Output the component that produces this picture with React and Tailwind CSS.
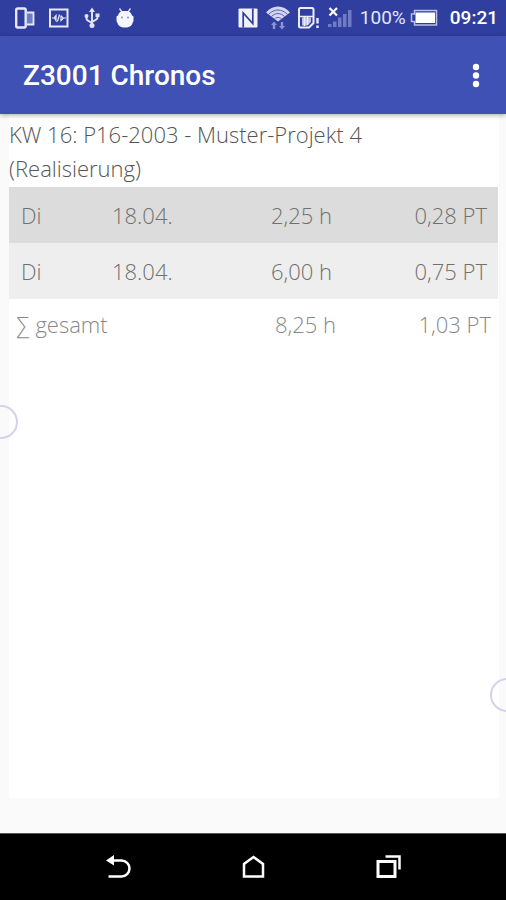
import React from 'react';

const entries = [
  { day: 'Di', date: '18.04.', hours: '2,25 h', pt: '0,28 PT' },
  { day: 'Di', date: '18.04.', hours: '6,00 h', pt: '0,75 PT' },
];

// --- Status bar icons (24px high viewboxes) ---
const DevicesIcon = () => (
  <svg width="20" height="24" viewBox="0 0 20 24" fill="none" stroke="#e6e8f8">
    <path d="M12 7h6v11h-6z" fill="#6f7bc4" stroke="none" />
    <rect x="1.2" y="2.5" width="9.500" height="19" rx="1.5" strokeWidth="2.4" />
    <path d="M12 6.500h6.500v12H12" strokeWidth="1.8" />
  </svg>
);

const CodeIcon = () => (
  <svg width="20" height="24" viewBox="0 0 20 24" fill="none" stroke="#e6e8f8">
    <rect x="1" y="3.500" width="17.500" height="17" strokeWidth="2" />
    <path d="M3 12h2l2-2.500v5L5.500 12M10.500 8.500l-2 7M12 9.500v5l2.500-2.500H17M12 9.500l2 2.500" strokeWidth="1.2" />
  </svg>
);

const UsbIcon = () => (
  <svg width="18" height="24" viewBox="0 0 18 24" fill="none" stroke="#e0e3f6" strokeWidth="2">
    <path d="M9 5v14M3.5 10v2.500q0 1.500 1.500 2.200l4 2.300M14.500 9.500v2q0 1.500-1.500 2.200l-4 2.300" />
    <path d="M9 1.500l3 4.500H6z" fill="#e0e3f6" stroke="none" />
    <circle cx="9" cy="19.500" r="2.500" fill="#e0e3f6" stroke="none" />
    <circle cx="3.500" cy="10" r="2" fill="#e0e3f6" stroke="none" />
    <path d="M12.500 7.500h4v3.500h-4z" fill="#e0e3f6" stroke="none" />
  </svg>
);

const DroidIcon = () => (
  <svg width="20" height="24" viewBox="0 0 20 24" fill="#f5f6ff">
    <path d="M4.500 2.500L7 6M15.500 2.500L13 6" stroke="#e0e3f6" strokeWidth="1.300" />
    <path d="M3 9.500c.5-2.500 3-4.500 5-4.500h4c2 0 4.500 2 5 4.500l1.500 1v4.500L17.500 17c-.5 2.500-3 4.500-7.500 4.500S3 19.500 2.500 17l-1-2v-4.500z" />
    <circle cx="7" cy="11.500" r="1" fill="#8791d0" />
    <circle cx="13" cy="11.500" r="1" fill="#8791d0" />
  </svg>
);

const NfcIcon = () => (
  <svg width="20" height="24" viewBox="0 0 20 24">
    <rect x="0.500" y="2.500" width="19" height="19" rx="1" fill="#f0f2fd" />
    <path d="M5.200 21.500V7l9.600 10.500V2.500" fill="none" stroke="#303f9f" strokeWidth="1.700" />
  </svg>
);

const WifiIcon = () => (
  <svg width="24" height="24" viewBox="0 0 24 24">
    <path d="M0 6.500C6-1.500 18-1.500 24 6.500L12 15.500z" fill="#d3d6f0" />
    <path d="M2.500 8.500c5.500-6 13.500-6 19 0M5.500 10.500c4-4 9-4 13 0M8.500 13c2-2 5-2 7 0" fill="none" stroke="#5260b4" strokeWidth="1" />
    <path d="M8 15.500l3 3.500H9.200v4H6.800v-4H5zM16 23.500l3-3.500h-1.800v-4h-2.400v4H13z" fill="#8994d2" />
  </svg>
);

const SimAlertIcon = () => (
  <svg width="22" height="24" viewBox="0 0 22 24">
    <path d="M1 3.500q0-1.500 1.500-1.500h11.500q1.500 0 1.500 1.500V17L11 21.500H2.500q-1.500 0-1.500-1.500z" fill="none" stroke="#eceefb" strokeWidth="2" />
    <path d="M4 11.500h9V16l-3.500 3.500H4z" fill="#bcc2e8" />
    <path d="M2 10.500h13M6.500 11v9M9.500 11v8" stroke="#eceefb" strokeWidth="1.500" />
    <path d="M19.500 12v5.500M19.500 19.500v2.500" stroke="#eceefb" strokeWidth="2.400" />
  </svg>
);

const SignalIcon = () => (
  <svg width="24" height="24" viewBox="0 0 24 24">
    <path d="M0 18h3.500v3H0zM5 15.500h3.500V21H5zM10 11.500h3.500V21H10zM15 8h3.500v13H15zM20 4h3.500v17H20z" fill="#6f7bc4" />
    <path d="M1.500 2l7.500 7.500M9 2L1.500 9.500" stroke="#fff" strokeWidth="2.200" />
  </svg>
);

const BatteryIcon = () => (
  <svg width="28" height="24" viewBox="0 0 28 24">
    <path d="M4.500 4.500h22v14.500h-22v-3.500H1.500V8h3z" fill="none" stroke="#b8bee6" strokeWidth="1.500" />
    <rect x="5.500" y="6.500" width="19.500" height="10.500" fill="#fff" />
  </svg>
);

const StatusBar = () => (
  <header className="flex h-9 items-center justify-between bg-[#303f9f] pl-[15px] pr-2 font-['Roboto',sans-serif] text-white">
    <div className="flex items-center gap-3.5">
      <DevicesIcon />
      <CodeIcon />
      <UsbIcon />
      <DroidIcon />
    </div>
    <div className="flex items-center">
      <div className="flex items-center gap-2">
        <NfcIcon />
        <WifiIcon />
        <SimAlertIcon />
        <SignalIcon />
      </div>
      <span className="ml-2 text-[19px] leading-6 text-[#e4e7fa]">100%</span>
      <span className="ml-1"><BatteryIcon /></span>
      <span className="ml-3 text-[19px] font-medium leading-6">09:21</span>
    </div>
  </header>
);

const AppBar = () => (
  <div className="relative z-10 flex h-[78px] items-center justify-between bg-[#3f51b5] pl-[23px] pr-4 pt-0.5 shadow-[0_1px_5px_rgba(0,0,0,0.35)]">
    <h1 className="font-['Roboto',sans-serif] text-[28px] font-medium leading-9 text-white">Z3001 Chronos</h1>
    <button aria-label="Menu" className="flex h-10 w-7 items-center justify-center">
      <svg width="8" height="26" viewBox="0 0 8 26" fill="#fff">
        <circle cx="4" cy="4" r="3.200" />
        <circle cx="4" cy="12.500" r="3.200" />
        <circle cx="4" cy="21" r="3.200" />
      </svg>
    </button>
  </div>
);

const TimeTable = () => (
  <table className="w-full table-fixed text-[22px] font-light leading-8 text-[#707070]">
    <colgroup>
      <col className="w-[93px]" />
      <col className="w-[108px]" />
      <col />
      <col className="w-[155px]" />
    </colgroup>
    <tbody>
      {entries.map((entry, i) => (
        <tr key={i} className="h-14 odd:bg-[#dcdcdc] even:bg-[#eeeeee]">
          <td className="px-3">{entry.day}</td>
          <td className="px-2.5">{entry.date}</td>
          <td className="px-[11px] text-right">{entry.hours}</td>
          <td className="px-[11px] text-right">{entry.pt}</td>
        </tr>
      ))}
    </tbody>
    <tfoot>
      <tr className="h-[50px] text-[#888888]">
        <td colSpan={2} className="px-[7px]">∑ gesamt</td>
        <td className="px-[7px] text-right">8,25 h</td>
        <td className="px-[7px] text-right">1,03 PT</td>
      </tr>
    </tfoot>
  </table>
);

const NavBar = () => (
  <nav className="flex h-[67px] items-center justify-center border-t border-[#555555] bg-black">
    <button aria-label="Back" className="flex h-full w-[135px] items-center justify-center">
      <svg width="26" height="26" viewBox="0 0 26 26" fill="none" stroke="#fff" strokeWidth="2.500">
        <path d="M7 6.500h9.500a8 8 0 0 1 0 16H3.500" />
        <path d="M1 6.500L9 1v10.500z" fill="#fff" stroke="none" />
      </svg>
    </button>
    <button aria-label="Home" className="flex h-full w-[135px] items-center justify-center">
      <svg width="26" height="26" viewBox="0 0 26 26" fill="none" stroke="#fff" strokeWidth="2.500">
        <path d="M4 22.500V10L13.500 3 23 10v12.500z" />
      </svg>
    </button>
    <button aria-label="Recent apps" className="flex h-full w-[135px] items-center justify-center">
      <svg width="26" height="26" viewBox="0 0 26 26" fill="none" stroke="#fff">
        <path d="M3 7.500h17v15H3z" strokeWidth="3" />
        <path d="M10.500 2.500H24.500V15.500" strokeWidth="2.500" />
      </svg>
    </button>
  </nav>
);

const App = () => {
  return (
    <div className="relative flex min-h-screen flex-col overflow-hidden bg-[#fafafa]">
      <StatusBar />
      <AppBar />
      <main className="flex flex-1 flex-col pb-[35px] pl-[9px] pr-[7px] font-['Open_Sans',sans-serif]">
        <section className="flex-1 bg-white pr-px pt-[3px]">
          <h2 className="pb-0.5 text-[22px] font-light leading-[34px] text-[#555555]">
            KW 16: P16-2003 - Muster-Projekt 4<br />(Realisierung)
          </h2>
          <TimeTable />
        </section>
      </main>
      <NavBar />

      {/* edge swipe handles */}
      <div className="absolute -left-4 top-[405px] size-[34px] rounded-full border-2 border-[#d3d3ee]" />
      <div className="absolute -right-[18px] top-[678px] size-[34px] rounded-full border-2 border-[#d3d3ee]" />
    </div>
  );
};

export default App;
